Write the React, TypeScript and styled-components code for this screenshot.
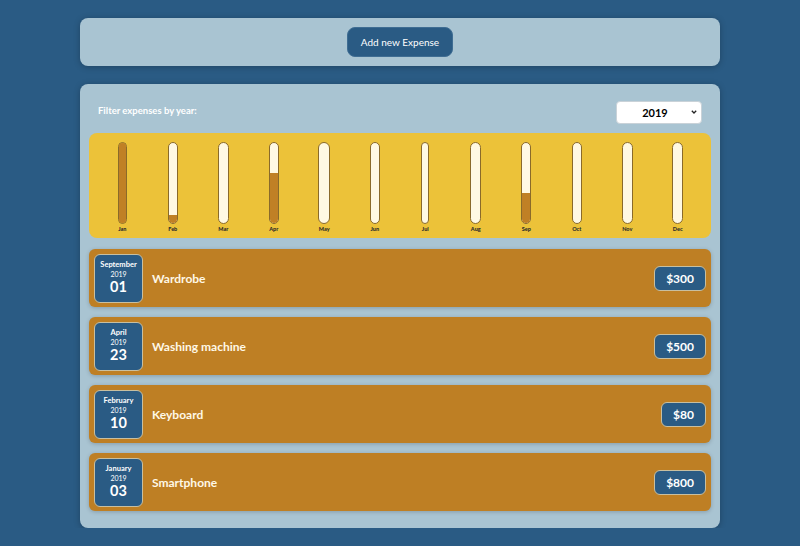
import React from "react";
import styled, { createGlobalStyle } from "styled-components";

const GlobalStyle = createGlobalStyle`
  * { box-sizing: border-box; }
  html, body { margin: 0; padding: 0; }
  body {
    background: #2a5b84;
    font-family: Lato, "Open Sans", "Liberation Sans", sans-serif;
  }
`;

const Page = styled.div`
  width: 640px;
  margin: 18px auto 0;
  display: flex;
  flex-direction: column;
  gap: 18px;
`;

const Card = styled.div`
  background: #a9c4d2;
  border-radius: 8px;
  box-shadow: 0 1px 6px rgba(0, 0, 0, 0.25);
  padding: 9px;
`;

const NewExpenseCard = styled(Card)`
  display: flex;
  justify-content: center;
`;

const PrimaryButton = styled.button`
  width: 106px;
  height: 30px;
  background: #2a5b84;
  color: #fff;
  border: 1px solid #3f6d93;
  border-radius: 8px;
  font-family: inherit;
  font-size: 10px;
  cursor: pointer;
`;

const FilterRow = styled.div`
  display: flex;
  align-items: center;
  justify-content: space-between;
  padding: 0 9px;
  margin: 8px 0 9px;
`;

const FilterLabel = styled.label`
  color: #fff;
  font-weight: 700;
  font-size: 9.5px;
  margin-top: -4px;
`;

const SelectWrap = styled.div`
  position: relative;
  width: 86px;
  height: 23px;
`;

const YearSelect = styled.select`
  appearance: none;
  -webkit-appearance: none;
  width: 100%;
  height: 100%;
  border-radius: 4px;
  border: 1px solid #c9d2d8;
  background: #fff;
  font-family: inherit;
  font-weight: 700;
  font-size: 11px;
  padding: 0 8px 0 0;
  text-align: center;
  text-align-last: center;
  color: #000;
`;

const Chevron = styled.svg`
  position: absolute;
  right: 5px;
  top: 9px;
  width: 6px;
  height: 4px;
  pointer-events: none;
`;

const Chart = styled.div`
  background: #ecc239;
  border-radius: 8px;
  height: 105px;
  padding: 9px 8px 6px;
  display: flex;
  justify-content: space-around;
  text-align: center;
`;

const BarColumn = styled.div`
  flex: 1;
  display: flex;
  flex-direction: column;
  align-items: center;
  height: 100%;
`;

const BarWrap = styled.div`
  display: flex;
  flex-direction: column;
  align-items: stretch;
  height: 100%;
`;

const BarInner = styled.div`
  flex: 1;
  width: 100%;
  border: 1px solid #8a6a2a;
  border-radius: 8px;
  background: #fff9e3;
  overflow: hidden;
  display: flex;
  flex-direction: column;
  justify-content: flex-end;
`;

const BarFill = styled.div`
  width: 100%;
  background: #c08025;
`;

const BarLabel = styled.div`
  font-size: 5.5px;
  font-weight: 900;
  color: #2b2b2b;
  margin-top: 2px;
  line-height: 6px;
  padding: 0 0.5px;
`;

const List = styled.ul`
  list-style: none;
  margin: 11px 0 8px;
  padding: 0;
  display: flex;
  flex-direction: column;
  gap: 10px;
`;

const Item = styled.li`
  background: #be7f24;
  border-radius: 6px;
  height: 58px;
  padding: 4px 5px;
  display: flex;
  align-items: center;
  gap: 9px;
  box-shadow: 0 1px 4px rgba(0, 0, 0, 0.2);
`;

const DateBox = styled.div`
  width: 49px;
  height: 49px;
  background: #2a5b84;
  border: 1px solid #c8bfa0;
  border-radius: 6px;
  color: #fff;
  display: flex;
  flex-direction: column;
  align-items: center;
  justify-content: center;
`;

const DateMonth = styled.div`
  font-size: 7.5px;
  font-weight: 700;
  line-height: 8px;
`;

const DateYear = styled.div`
  font-size: 7px;
  line-height: 10px;
`;

const DateDay = styled.div`
  font-size: 14.5px;
  font-weight: 700;
  line-height: 16px;
`;

const Description = styled.div`
  flex: 1;
  display: flex;
  align-items: center;
  justify-content: space-between;
`;

const Title = styled.h2`
  margin: 0;
  color: #fff8e6;
  font-size: 12px;
  font-weight: 700;
`;

const Price = styled.div`
  background: #2a5b84;
  color: #fff;
  border: 1px solid #c8bfa0;
  border-radius: 6px;
  font-size: 12px;
  font-weight: 700;
  height: 25px;
  padding: 0 11px;
  display: flex;
  align-items: center;
`;

const months = ["Jan", "Feb", "Mar", "Apr", "May", "Jun", "Jul", "Aug", "Sep", "Oct", "Nov", "Dec"];

const expenses = [
  { id: 1, month: "September", year: "2019", day: "01", title: "Wardrobe", amount: 300, m: 8 },
  { id: 2, month: "April", year: "2019", day: "23", title: "Washing machine", amount: 500, m: 3 },
  { id: 3, month: "February", year: "2019", day: "10", title: "Keyboard", amount: 80, m: 1 },
  { id: 4, month: "January", year: "2019", day: "03", title: "Smartphone", amount: 800, m: 0 },
];

export default function App() {
  const totals = months.map((_, i) =>
    expenses.filter((e) => e.m === i).reduce((s, e) => s + e.amount, 0)
  );
  const max = Math.max(...totals);
  return (
    <>
      <GlobalStyle />
      <Page>
        <NewExpenseCard>
          <PrimaryButton>Add new Expense</PrimaryButton>
        </NewExpenseCard>
        <Card>
          <FilterRow>
            <FilterLabel>Filter expenses by year:</FilterLabel>
            <SelectWrap>
              <YearSelect defaultValue="2019">
                <option value="2022">2022</option>
                <option value="2021">2021</option>
                <option value="2020">2020</option>
                <option value="2019">2019</option>
              </YearSelect>
              <Chevron viewBox="0 0 6 4">
                <path d="M0.8 0.8 L3 3 L5.2 0.8" fill="none" stroke="#222" strokeWidth="1.3" />
              </Chevron>
            </SelectWrap>
          </FilterRow>
          <Chart>
            {months.map((label, i) => (
              <BarColumn key={label}>
                <BarWrap>
                  <BarInner>
                    <BarFill style={{ height: `${(totals[i] / max) * 100}%` }} />
                  </BarInner>
                  <BarLabel>{label}</BarLabel>
                </BarWrap>
              </BarColumn>
            ))}
          </Chart>
          <List>
            {expenses.map((e) => (
              <Item key={e.id}>
                <DateBox>
                  <DateMonth>{e.month}</DateMonth>
                  <DateYear>{e.year}</DateYear>
                  <DateDay>{e.day}</DateDay>
                </DateBox>
                <Description>
                  <Title>{e.title}</Title>
                  <Price>${e.amount}</Price>
                </Description>
              </Item>
            ))}
          </List>
        </Card>
      </Page>
    </>
  );
}
